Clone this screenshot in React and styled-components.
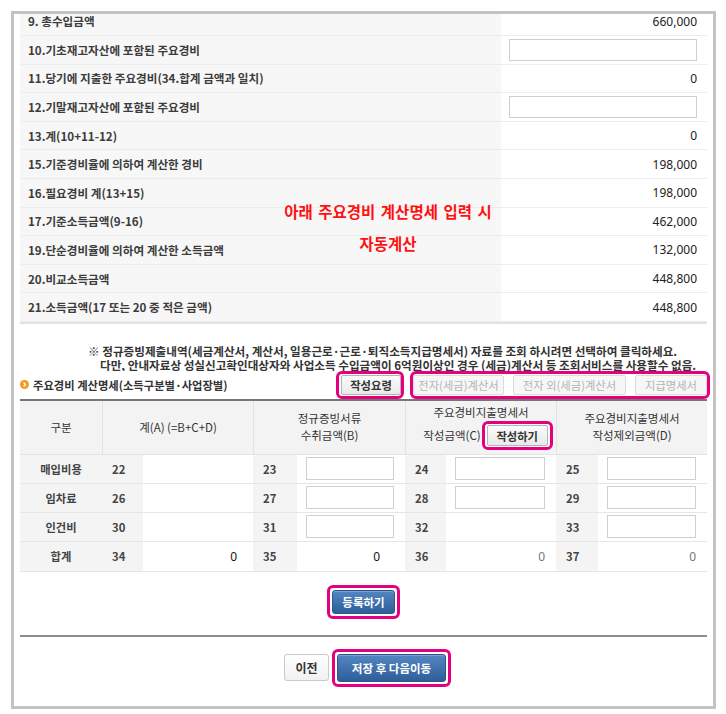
import React from "react";
import styled, { createGlobalStyle } from "styled-components";

const GlobalStyle = createGlobalStyle`
  html, body { margin: 0; padding: 0; background: #fff; }
  body {
    font-family: "Noto Sans CJK KR", "Noto Sans", sans-serif;
    color: #333;
  }
  * { box-sizing: border-box; }
`;

const summaryRows = [
  { label: "9. 총수입금액", value: "660,000" },
  { label: "10.기초재고자산에 포함된 주요경비", input: true },
  { label: "11.당기에 지출한 주요경비(34.합계 금액과 일치)", value: "0" },
  { label: "12.기말재고자산에 포함된 주요경비", input: true },
  { label: "13.계(10+11-12)", value: "0" },
  { label: "15.기준경비율에 의하여 계산한 경비", value: "198,000" },
  { label: "16.필요경비 계(13+15)", value: "198,000" },
  { label: "17.기준소득금액(9-16)", value: "462,000" },
  { label: "19.단순경비율에 의하여 계산한 소득금액", value: "132,000" },
  { label: "20.비교소득금액", value: "448,800" },
  { label: "21.소득금액(17 또는 20 중 적은 금액)", value: "448,800" },
];

const detailRows = [
  { name: "매입비용", cells: [{ no: 22 }, { no: 23, input: true }, { no: 24, input: true }, { no: 25, input: true }] },
  { name: "임차료", cells: [{ no: 26 }, { no: 27, input: true }, { no: 28, input: true }, { no: 29, input: true }] },
  { name: "인건비", cells: [{ no: 30 }, { no: 31, input: true }, { no: 32 }, { no: 33, input: true }] },
  {
    name: "합계",
    cells: [
      { no: 34, value: "0", pad: 16 },
      { no: 35, value: "0", pad: 25 },
      { no: 36, value: "0", pad: 11, light: true },
      { no: 37, value: "0", pad: 11, light: true },
    ],
  },
];

const App = () => {
  return (
    <>
      <GlobalStyle />
      <Frame>
        <Summary>
          {summaryRows.map((r) => (
            <SumRow key={r.label}>
              <SumLabel>{r.label}</SumLabel>
              <SumValue>{r.input ? <SumInput /> : r.value}</SumValue>
            </SumRow>
          ))}
          <Callout>
            <span>아래 주요경비 계산명세 입력 시</span>
            <span>자동계산</span>
          </Callout>
        </Summary>

        <Notice>
          <NoticeLine $indent={68}>
            ※ 정규증빙제출내역(세금계산서, 계산서, 일용근로·근로·퇴직소득지급명세서) 자료를 조회 하시려면 선택하여 클릭하세요.
          </NoticeLine>
          <NoticeLine $indent={80}>
            다만, 안내자료상 성실신고확인대상자와 사업소득 수입금액이 6억원이상인 경우 (세금)계산서 등 조회서비스를 사용할수 없음.
          </NoticeLine>
        </Notice>

        <ToolRow>
          <Heading>
            <Bullet>
              <svg width="9" height="9" viewBox="0 0 9 9">
                <circle cx="4.5" cy="4.5" r="4.5" fill="#f39a1e" />
                <path d="M3.6 2.6 L5.4 4.5 L3.6 6.4" stroke="#fff" strokeWidth="1.4" fill="none" />
              </svg>
            </Bullet>
            주요경비 계산명세(소득구분별·사업장별)
          </Heading>
          <ToolGroup>
            <Mark $pad="1px 0 1px 2px">
              <SmallButton $w={60}>작성요령</SmallButton>
            </Mark>
            <Mark $pad="1px 0" $gap={9}>
              <SmallButton $w={91} disabled>전자(세금)계산서</SmallButton>
              <SmallButton $w={113} disabled>전자 외(세금)계산서</SmallButton>
              <SmallButton $w={72} disabled>지급명세서</SmallButton>
            </Mark>
          </ToolGroup>
        </ToolRow>

        <Detail>
          <HeadCell $span={1} $first>구분</HeadCell>
          <HeadCell $span={2}>계(A) (=B+C+D)</HeadCell>
          <HeadCell $span={2}>
            정규증빙서류
            <br />
            수취금액(B)
          </HeadCell>
          <HeadCell $span={2}>
            주요경비지출명세서
            <HeadLine>
              작성금액(C)
              <Mark $pad="1px 2px">
                <SmallButton $w={61} $h={21}>작성하기</SmallButton>
              </Mark>
            </HeadLine>
          </HeadCell>
          <HeadCell $span={2}>
            주요경비지출명세서
            <br />
            작성제외금액(D)
          </HeadCell>

          {detailRows.map((row) => (
            <React.Fragment key={row.name}>
              <NameCell>{row.name}</NameCell>
              {row.cells.map((c) => (
                <React.Fragment key={c.no}>
                  <NoCell>{c.no}</NoCell>
                  <ValCell $pad={c.pad} $light={c.light}>
                    {c.input ? <CellInput /> : c.value}
                  </ValCell>
                </React.Fragment>
              ))}
            </React.Fragment>
          ))}
        </Detail>

        <CenterRow $top={13}>
          <Mark $pad="2px">
            <BlueButton $w={63} $h={24}>등록하기</BlueButton>
          </Mark>
        </CenterRow>

        <Divider />

        <CenterRow $top={12} $shift={8}>
          <PlainButton>이전</PlainButton>
          <Mark $pad="2px">
            <BlueButton $w={109} $h={28}>저장 후 다음이동</BlueButton>
          </Mark>
        </CenterRow>
      </Frame>
    </>
  );
};

const Frame = styled.div`
  position: relative;
  margin: 11px;
  width: 705px;
  height: 698px;
  border: 3px solid #c3c3c3;
  padding: 0 6px;
  overflow: hidden;
`;

const Summary = styled.div`
  position: relative;
  margin-top: -6.6px;
  border-bottom: 2px solid #e2e2e2;
`;

const SumRow = styled.div`
  display: grid;
  grid-template-columns: 481px 1fr;
  height: 28.6px;
  border-bottom: 1px solid #ececec;
  &:last-of-type {
    border-bottom: none;
  }
`;

const SumLabel = styled.div`
  background: #f7f7f7;
  display: flex;
  align-items: center;
  padding-left: 8px;
  font-size: 11.6px;
  font-weight: 700;
  color: #3c3c3c;
`;

const SumValue = styled.div`
  display: flex;
  align-items: center;
  justify-content: flex-end;
  padding: 0 10px 0 8px;
  font-family: "Noto Sans", sans-serif;
  font-size: 12px;
  color: #222;
`;

const SumInput = styled.input`
  width: 100%;
  height: 22px;
  border: 1px solid #cfcfcf;
  background: #fff;
`;

const Callout = styled.div`
  position: absolute;
  left: 255px;
  top: 194px;
  width: 226px;
  display: flex;
  flex-direction: column;
  align-items: center;
  gap: 12px;
  font-size: 15.5px;
  font-weight: 700;
  word-spacing: 2px;
  color: #ff1111;
  line-height: 20px;
  white-space: nowrap;
`;

const Notice = styled.div`
  margin-top: 20px;
  font-size: 11.6px;
  font-weight: 700;
  line-height: 14.5px;
  color: #333;
  white-space: nowrap;
`;

const NoticeLine = styled.div`
  padding-left: ${(p) => p.$indent}px;
`;

const ToolRow = styled.div`
  position: relative;
  margin-top: -2px;
  height: 28px;
  display: flex;
  align-items: center;
  justify-content: space-between;
  background: #fff;
`;

const Heading = styled.div`
  display: flex;
  align-items: center;
  gap: 4px;
  font-size: 11.3px;
  font-weight: 700;
  color: #333;
`;

const Bullet = styled.span`
  display: flex;
  width: 9px;
  height: 9px;
`;

const ToolGroup = styled.div`
  display: flex;
  gap: 6px;
  margin-right: -3px;
`;

const Mark = styled.div`
  display: flex;
  align-items: center;
  gap: ${(p) => p.$gap || 0}px;
  border: 3px solid #e5007e;
  border-radius: 6px;
  padding: ${(p) => p.$pad};
  background: #fff;
`;

const SmallButton = styled.button`
  width: ${(p) => p.$w}px;
  height: ${(p) => p.$h || 20}px;
  padding: 0;
  border: 1px solid ${(p) => (p.disabled ? "#dcdcdc" : "#b5b5b5")};
  border-radius: 2px;
  background: ${(p) => (p.disabled ? "#f7f7f7" : "linear-gradient(#fbfbfb, #e9e9e9)")};
  font-family: "Noto Sans CJK KR", sans-serif;
  font-size: 11.3px;
  font-weight: ${(p) => (p.disabled ? 400 : 700)};
  color: ${(p) => (p.disabled ? "#b4b4b4" : "#333")};
`;

const Detail = styled.div`
  display: grid;
  grid-template-columns: 82px 41px 110px 44px 108px 41px 110px 42px 109px;
  grid-template-rows: 54px repeat(4, 29px);
  border-top: 2px solid #767676;
  border-bottom: 1px solid #e6e6e6;
`;

const HeadCell = styled.div`
  grid-column: span ${(p) => p.$span};
  display: flex;
  flex-direction: column;
  align-items: center;
  justify-content: center;
  text-align: center;
  background: #f3f3f3;
  border-left: ${(p) => (p.$first ? "none" : "1px solid #e3e3e3")};
  border-bottom: 1px solid #e3e3e3;
  font-size: 11.5px;
  line-height: 17px;
  color: #333;
`;

const HeadLine = styled.div`
  display: flex;
  align-items: center;
  gap: 1px;
  margin-left: 14px;
`;

const BodyCell = styled.div`
  display: flex;
  align-items: center;
  border-bottom: 1px solid #e6e6e6;
  &:nth-last-child(-n + 9) {
    border-bottom: none;
  }
`;

const NameCell = styled(BodyCell)`
  justify-content: center;
  background: #f4f4f4;
  font-size: 11.3px;
  font-weight: 700;
  color: #444;
`;

const NoCell = styled(BodyCell)`
  padding-left: 10px;
  background: #f4f4f4;
  font-size: 11.3px;
  font-weight: 700;
  color: #444;
`;

const ValCell = styled(BodyCell)`
  justify-content: flex-end;
  padding: 0 ${(p) => p.$pad || 11}px 0 9px;
  background: #fff;
  font-family: "Noto Sans", sans-serif;
  font-size: 12px;
  color: ${(p) => (p.$light ? "#777" : "#111")};
`;

const CellInput = styled.input`
  width: 100%;
  height: 23px;
  border: 1px solid #cfcfcf;
  background: #fff;
`;

const CenterRow = styled.div`
  display: flex;
  justify-content: center;
  align-items: center;
  gap: 3px;
  margin-top: ${(p) => p.$top}px;
  padding-left: ${(p) => p.$shift || 0}px;
`;

const BlueButton = styled.button`
  width: ${(p) => p.$w}px;
  height: ${(p) => p.$h}px;
  padding: 0;
  border: 1px solid #2a548a;
  border-radius: 3px;
  background: linear-gradient(#5386c2, #2f5e99);
  box-shadow: inset 0 1px 0 rgba(255, 255, 255, 0.25);
  font-family: "Noto Sans CJK KR", sans-serif;
  font-size: 11.5px;
  font-weight: 700;
  color: #fff;
`;

const PlainButton = styled.button`
  width: 45px;
  height: 27px;
  padding: 0;
  border: 1px solid #c9c9c9;
  border-radius: 3px;
  background: linear-gradient(#ffffff, #f1f1f1);
  font-family: "Noto Sans CJK KR", sans-serif;
  font-size: 12px;
  font-weight: 700;
  color: #333;
`;

const Divider = styled.div`
  margin-top: 16px;
  height: 2px;
  background: #8d8d8d;
`;

export default App;
